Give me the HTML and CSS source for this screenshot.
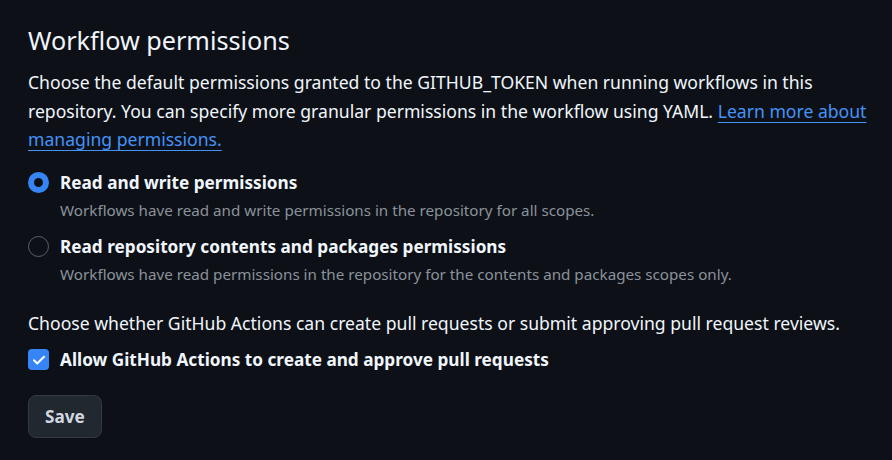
FILE: index.html
```html
<!DOCTYPE html>
<html lang="en">
<head>
<meta charset="utf-8">
<link rel="stylesheet" href="styles.css">
</head>
<body>
<main class="page">
  <h2 class="heading">Workflow permissions</h2>
  <p class="intro">Choose the default permissions granted to the GITHUB_TOKEN when running workflows in this repository. You can specify more granular permissions in the workflow using YAML. <a class="link" href="#">Learn more about managing permissions.</a></p>

  <div class="options">
    <label class="option">
      <span class="radio radio-checked"></span>
      <span class="option-body">
        <span class="option-title">Read and write permissions</span>
        <span class="option-desc">Workflows have read and write permissions in the repository for all scopes.</span>
      </span>
    </label>
    <label class="option">
      <span class="radio"></span>
      <span class="option-body">
        <span class="option-title">Read repository contents and packages permissions</span>
        <span class="option-desc">Workflows have read permissions in the repository for the contents and packages scopes only.</span>
      </span>
    </label>
  </div>

  <p class="intro second">Choose whether GitHub Actions can create pull requests or submit approving pull request reviews.</p>

  <label class="check-row">
    <span class="checkbox">
      <svg viewBox="0 0 16 16" width="16" height="16"><path d="M3 8.3l3.2 3.2L13 4.7" fill="none" stroke="#ffffff" stroke-width="2" stroke-linecap="round" stroke-linejoin="round"/></svg>
    </span>
    <span class="option-title">Allow GitHub Actions to create and approve pull requests</span>
  </label>

  <button class="btn" type="button">Save</button>
</main>
</body>
</html>
```

FILE: styles.css
```css
html, body {
  margin: 0;
  padding: 0;
  background: #0d1117;
}
body {
  font-family: "Noto Sans", "Liberation Sans", sans-serif;
  color: #f0f6fc;
}
.page {
  padding: 22px 12px 0 28px;
  display: flex;
  flex-direction: column;
  align-items: flex-start;
}
.heading {
  margin: 0;
  font-size: 25.2px;
  font-weight: 400;
  line-height: 36px;
  color: #f0f6fc;
}
.intro {
  margin: 10px 0 0 0;
  font-size: 17.6px;
  line-height: 28.5px;
  color: #f0f6fc;
}
.link {
  color: #4493f8;
  text-decoration: underline;
  text-underline-offset: 4px;
}
.options {
  margin-top: 15px;
  display: flex;
  flex-direction: column;
  gap: 12px;
}
.option {
  display: flex;
  align-items: flex-start;
  gap: 11px;
}
.radio {
  flex: none;
  box-sizing: border-box;
  width: 21px;
  height: 21px;
  margin-top: 3px;
  border-radius: 50%;
  border: 1.5px solid #5b626b;
  background: #0d1117;
}
.radio-checked {
  border: 6px solid #3685f6;
}
.option-body {
  display: flex;
  flex-direction: column;
}
.option-title {
  font-size: 17.2px;
  font-weight: 700;
  line-height: 27px;
  color: #f0f6fc;
}
.option-desc {
  margin-top: 3px;
  font-size: 15.2px;
  line-height: 22px;
  color: #8b929b;
}
.second {
  margin-top: 24px;
}
.check-row {
  margin-top: 9px;
  display: flex;
  align-items: center;
  gap: 11px;
}
.checkbox {
  flex: none;
  width: 21px;
  height: 21px;
  border-radius: 4px;
  background: #3685f6;
  display: flex;
  align-items: center;
  justify-content: center;
}
.btn {
  margin-top: 22px;
  box-sizing: border-box;
  height: 43px;
  padding: 0 16px;
  border-radius: 8px;
  border: 1px solid #353a42;
  background: #212830;
  color: #d1d7e0;
  font-family: "Noto Sans", "Liberation Sans", sans-serif;
  font-size: 17.2px;
  font-weight: 700;
}
```
